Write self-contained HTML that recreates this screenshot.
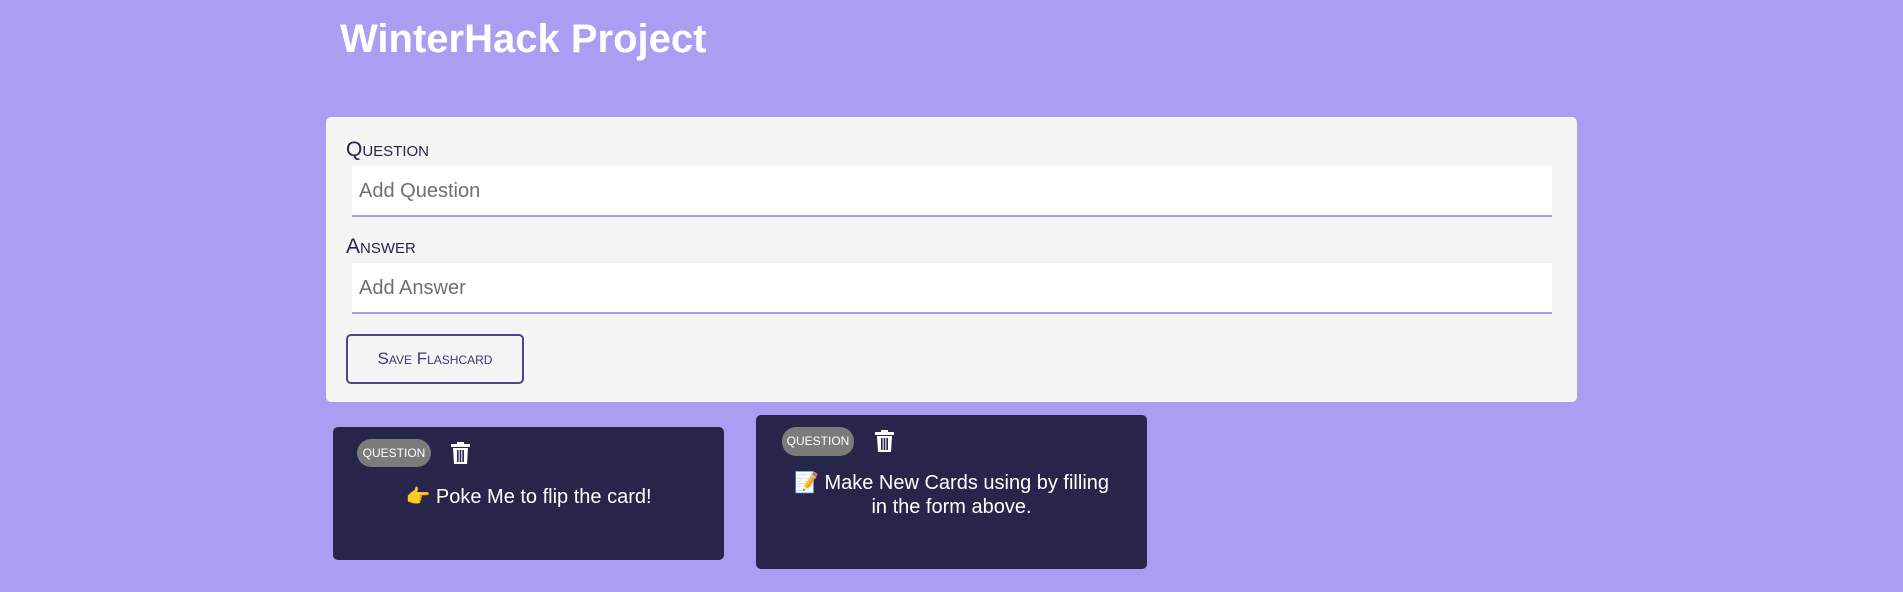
<!DOCTYPE html>
<html><head><meta charset="utf-8"><style>
body{margin:0;width:1903px;height:592px;background:#aa9ef3;font-family:"Liberation Sans","Noto Sans CJK JP",sans-serif;position:relative;overflow:hidden}
.a{position:absolute}
h1{position:absolute;left:340px;top:17px;margin:0;font-size:40px;font-weight:bold;color:#fff;white-space:nowrap}
.panel{left:326px;top:117px;width:1251px;height:285px;background:#f4f4f2;border-radius:5px}
.lbl{font-variant:small-caps;font-size:21px;color:#27234f;left:346px}
.inp{left:352px;width:1200px;height:49px;background:#fff;border-bottom:2px solid #a99cf0;font-size:20px;color:#6f6f6f;line-height:51px;box-sizing:content-box}
.inp span{padding-left:7px}
.btn{left:346px;top:334px;width:174px;height:46px;border:2px solid #4b4592;border-radius:5px;font-variant:small-caps;font-size:17px;color:#3b367f;text-align:center;line-height:46px}
.card{background:#27254a;border-radius:5px}
.badge{background:#7b7b7b;color:#fff;font-size:12px;border-radius:14px;text-align:center}
.txt{color:#fff;font-size:20px;text-align:center;line-height:24px}
</style></head><body>
<h1>WinterHack Project</h1>
<div class="a panel"></div>
<div class="a lbl" style="top:138px">Question</div>
<div class="a inp" style="top:166px"><span>Add Question</span></div>
<div class="a lbl" style="top:235px">Answer</div>
<div class="a inp" style="top:263px"><span>Add Answer</span></div>
<div class="a btn">Save Flashcard</div>

<div class="a card" style="left:333px;top:427px;width:391px;height:133px"></div>
<div class="a badge" style="left:357px;top:439px;width:74px;height:28px;line-height:28px">QUESTION</div>
<svg class="a" style="left:451px;top:442px" width="19" height="22" viewBox="0 0 19 22"><rect x="6" y="0" width="7" height="2" fill="#fff"/><rect x="0" y="2" width="19" height="3" fill="#fff"/><path d="M2 6h15l-1 16H3z" fill="#fff"/><rect x="6" y="8" width="1.6" height="12" fill="#27254a"/><rect x="8.7" y="8" width="1.6" height="12" fill="#27254a"/><rect x="11.4" y="8" width="1.6" height="12" fill="#27254a"/></svg>
<div class="a txt" style="left:333px;width:391px;top:485px">👉 Poke Me to flip the card!</div>

<div class="a card" style="left:756px;top:415px;width:391px;height:154px"></div>
<div class="a badge" style="left:782px;top:427px;width:72px;height:29px;line-height:29px">QUESTION</div>
<svg class="a" style="left:875px;top:430px" width="19" height="22" viewBox="0 0 19 22"><rect x="6" y="0" width="7" height="2" fill="#fff"/><rect x="0" y="2" width="19" height="3" fill="#fff"/><path d="M2 6h15l-1 16H3z" fill="#fff"/><rect x="6" y="8" width="1.6" height="12" fill="#27254a"/><rect x="8.7" y="8" width="1.6" height="12" fill="#27254a"/><rect x="11.4" y="8" width="1.6" height="12" fill="#27254a"/></svg>
<div class="a txt" style="left:776px;width:351px;top:471px">📝 Make New Cards using by filling<br>in the form above.</div>
</body></html>
